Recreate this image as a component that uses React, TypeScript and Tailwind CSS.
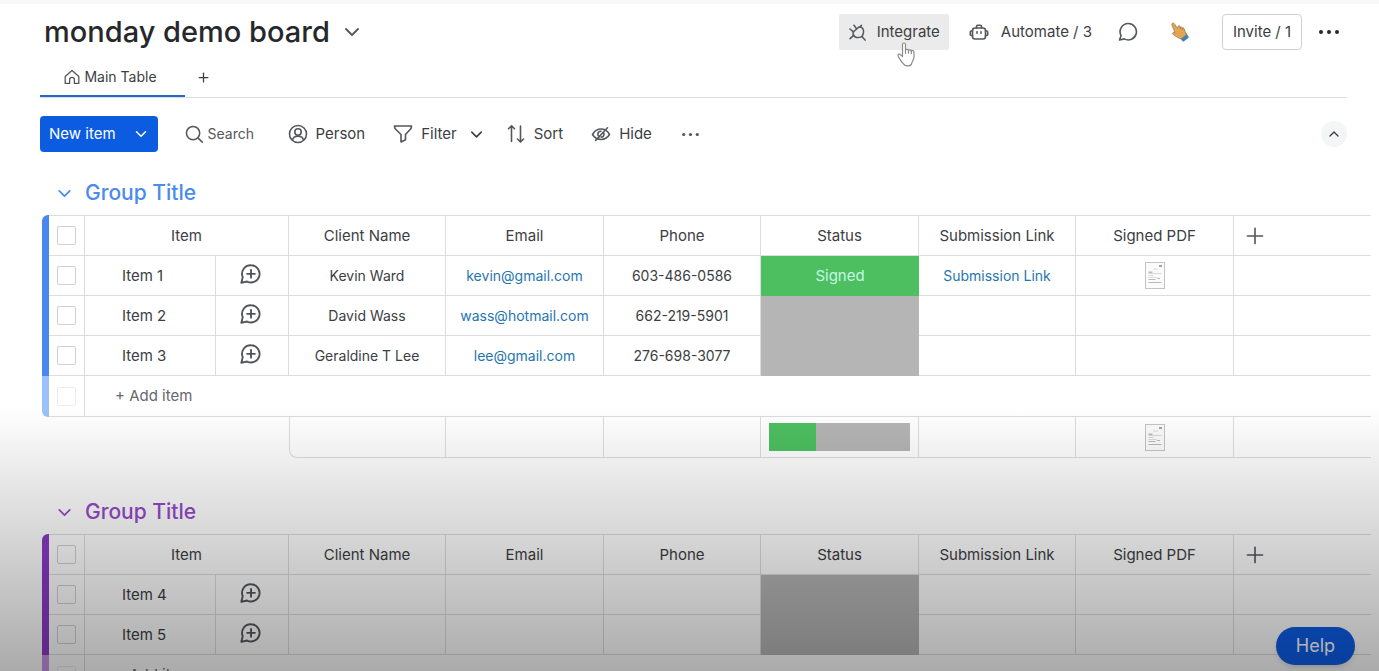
import { useState } from 'react'
import type { ReactNode } from 'react'
import clsx from 'clsx'
import { ChevronDown, ChevronUp, Plus } from 'lucide-react'

interface BoardItem {
  id: string
  name: string
  client?: string
  email?: string
  phone?: string
  status?: 'Signed'
  link?: string
  pdf?: boolean
}

interface BoardGroup {
  id: string
  titleClass: string
  barClass: string
  fadedBarClass: string
  items: BoardItem[]
}

const COLUMNS = ['Client Name', 'Email', 'Phone', 'Status', 'Submission Link', 'Signed PDF']

const GROUPS: BoardGroup[] = [
  {
    id: 'g1',
    titleClass: 'text-[#4a8bec]',
    barClass: 'bg-[#4a86f0]',
    fadedBarClass: 'bg-[#9ac1fa]',
    items: [
      {
        id: '1',
        name: 'Item 1',
        client: 'Kevin Ward',
        email: 'kevin@gmail.com',
        phone: '603-486-0586',
        status: 'Signed',
        link: 'Submission Link',
        pdf: true,
      },
      { id: '2', name: 'Item 2', client: 'David Wass', email: 'wass@hotmail.com', phone: '662-219-5901' },
      { id: '3', name: 'Item 3', client: 'Geraldine T Lee', email: 'lee@gmail.com', phone: '276-698-3077' },
    ],
  },
  {
    id: 'g2',
    titleClass: 'text-[#9649cc]',
    barClass: 'bg-[#8a3ac6]',
    fadedBarClass: 'bg-[#c793e6]',
    items: [
      { id: '4', name: 'Item 4' },
      { id: '5', name: 'Item 5' },
    ],
  },
]

const Icon = ({ children, size = 19, className }: { children: ReactNode; size?: number; className?: string }) => (
  <svg
    width={size}
    height={size}
    viewBox="0 0 20 20"
    fill="none"
    stroke="currentColor"
    strokeWidth={1.6}
    strokeLinecap="round"
    strokeLinejoin="round"
    className={clsx('shrink-0 text-[#55575c]', className)}
    aria-hidden="true"
  >
    {children}
  </svg>
)

const HomeIcon = () => (
  <Icon size={16}>
    <path d="M1.500 9.500 10 2l8.500 7.500V18H13v-4.500a3 3 0 0 0-6 0V18H1.500z" />
  </Icon>
)

const PlugIcon = () => (
  <Icon>
    <path d="M5.500 9.500 10.500 5c1.500-1.300 3.500-1 4.800.5s1.500 3 1 4.800c-.3 1.300-.8 3-1.800 4-1.700.8-3.500 1.300-5.500.9-2.500-.6-4.500-3-3.500-5.700z" />
    <path d="m6.300 2.300 2.800 3.900M2 6.300l3.800 3M12.200 4.400l2-2M2.200 16.500l4-3.700M14.500 14.200l3.500 3.800" />
  </Icon>
)

const RobotIcon = () => (
  <Icon size={20}>
    <rect x="3.500" y="6" width="13" height="11" rx="2.500" />
    <path d="M7.500 6V4.500c0-.8.500-1.200 1.200-1.200h2.600c.7 0 1.200.4 1.200 1.200V6M3.500 9H2.300c-.6 0-1 .4-1 1v2.500c0 .6.400 1 1 1h1.200M16.500 9h1.200c.6 0 1 .4 1 1v2.500c0 .6-.4 1-1 1h-1.200M8 9.700v1.600M12 9.700v1.600" />
  </Icon>
)

const ChatIcon = () => (
  <Icon size={20}>
    <path d="M10.200 1.500a8.200 8.200 0 1 1-3.900 15.400L1.500 18l1.600-4.400A8.200 8.200 0 0 1 10.200 1.500z" />
  </Icon>
)

const ChatPlusIcon = () => (
  <Icon size={21}>
    <path
      d="M10.500 1.200a8.200 8.200 0 1 1-3.800 15.500L1.200 18l1.400-5.400A8.200 8.200 0 0 1 10.500 1.200zM10.500 5.700v7.400M6.800 9.400h7.400"
      strokeWidth={1.8}
    />
  </Icon>
)

const WavingHand = () => (
  <svg width="18" height="20" viewBox="0 0 18 20" aria-hidden="true">
    <path d="m8.800 15.800 6.300-4.800 2.400 3.400c.4.600.3 1.100-.2 1.500l-4.300 3.300c-.6.400-1.200.4-1.600-.2z" fill="#3f7fba" />
    <path
      d="M1.300 1.400c.8-.6 1.700-.3 2.200.5l2.700 4.300 1-2c.4-.9 1.700-.6 1.900.3l.1.700c.8-.6 1.700-.3 2 .6 1-.3 1.800.2 2 1.100l1.800 5c.2.800 0 1.300-.6 1.700l-4 3c-.6.400-1.300.3-1.900-.1l-4-2.400c-1.500-.9-2.700-1.500-2.900-2.600-.1-.9.600-1.300 1.500-1l1 .3L1 3.300c-.3-.7-.3-1.400.3-1.900z"
      fill="#e2a554"
      stroke="#a08048"
      strokeWidth=".8"
    />
    <path d="m9.200 5.200.6 2.300M11.200 5.800l.7 2.200" stroke="#a08048" strokeWidth=".8" />
  </svg>
)

const SearchIcon = () => (
  <Icon>
    <circle cx="8.500" cy="8.500" r="7" />
    <path d="m13.600 13.600 4.600 4.400" />
  </Icon>
)

const PersonIcon = () => (
  <Icon size={20}>
    <circle cx="10" cy="10" r="8.500" />
    <circle cx="10" cy="8" r="3.200" />
    <path d="M4.500 15.800c.5-2.500 2.400-3.600 5.500-3.600s5 1.100 5.500 3.600" />
  </Icon>
)

const FilterIcon = () => (
  <Icon size={20}>
    <path d="M1.500 2h17l-.5 2.500-5.500 6v5.300L8 18v-7.500L2 4.500z" />
  </Icon>
)

const SortIcon = () => (
  <Icon size={20}>
    <path d="M5.500 17.500V2M2.500 4.800l3-3 3 3M14.500 2v15.500M11.500 15l3 3 3-3" />
  </Icon>
)

const HideIcon = () => (
  <Icon size={20}>
    <path d="M1.500 10.500C3.500 7 6.500 5 10 5s6.500 1.800 8.500 5.500c-2 3.200-5 5-8.500 5s-6.500-1.700-8.500-5z" />
    <path d="M10 7.300c-2 0-3.200 1.300-3.200 3 0 1.200.7 2 1.700 2.600M12.600 8.700c1.100 1.900.1 4.200-2.300 4.400M16.500 3.800 4.500 16.500" />
  </Icon>
)

const Dots = ({ size = 20, radius = 2 }: { size?: number; radius?: number }) => (
  <svg width={size} height={size} viewBox="0 0 20 20" fill="currentColor" aria-hidden="true">
    <circle cx="2" cy="10" r={radius} />
    <circle cx="10" cy="10" r={radius} />
    <circle cx="18" cy="10" r={radius} />
  </svg>
)

const HandCursor = () => (
  <svg width="20" height="25" viewBox="0 0 20 25" fill="#fff" stroke="#8b8b8b" strokeWidth="1.200" strokeLinejoin="round" aria-hidden="true">
    <path d="M6.500 14.500V2.500C6.500 1.500 7.200 1 8 1s1.500.5 1.500 1.500v5.700c.2-1.300 2.900-1.200 3 .3.400-1.100 2.700-.9 2.800.6.500-1 2.700-.8 2.700 1v4.400c0 1.600-.5 3-1.200 4.200-.8 1.500-1.300 2.700-1.500 3.800-1.500 1.800-5.200 1.800-6.800.5-2.400-2-4.500-5-6.300-8.700-.9-1.800.8-3 2.200-1.700z" />
    <path d="M9.500 8.200v3.600M12.500 8.500v3.300M15.300 9.100v3" />
  </svg>
)

const PdfThumb = () => (
  <svg width="20" height="27" viewBox="0 0 20 27" className="mx-auto" role="img" aria-label="Signed document">
    <rect x=".5" y=".5" width="19" height="26" fill="#fbfbfb" stroke="#c4c4c4" />
    <path d="M14 4h3" stroke="#888" strokeWidth="1.500" />
    <path d="M8 7h5M3.500 9.500h4M3.500 11.500h13M3.500 13.500h5M3.500 15.500h8" stroke="#dadada" />
    <path d="M3.500 10.500h4M3.500 17.500h7M12 16.500h3M3.500 20.500h13" stroke="#bbb" />
  </svg>
)

const CELL = 'border-b border-r border-[#dcdde0] p-0'

const CheckCell = ({ label, faded }: { label: string; faded?: boolean }) => (
  <td className={CELL}>
    <input
      type="checkbox"
      aria-label={label}
      className={clsx(
        'mx-auto block size-[19px] appearance-none rounded-xs border bg-white checked:bg-blue-600',
        faded ? 'border-[#ebecef]' : 'border-[#cfd1d6]'
      )}
    />
  </td>
)

const ToolbarButton = ({ icon, label }: { icon: ReactNode; label: string }) => (
  <button type="button" className="flex items-center gap-2">
    {icon}
    {label}
  </button>
)

const GroupTable = ({ group }: { group: BoardGroup }) => {
  const signed = group.items.filter((item) => item.status === 'Signed').length
  const hasPdf = group.items.some((item) => item.pdf)

  return (
    <section>
      <h2 className={clsx('flex h-8 items-center gap-[10px] pl-[14px] text-[21px] font-medium', group.titleClass)}>
        <button type="button" aria-label="Collapse group">
          <ChevronDown size={21} />
        </button>
        Group Title
      </h2>
      <table className="mt-[6px] ml-[2px] w-full table-fixed border-separate border-spacing-0 text-center">
        <colgroup>
          <col className="w-[7px]" />
          <col className="w-[36px]" />
          <col className="w-[131px]" />
          <col className="w-[73px]" />
          <col className="w-[157px]" />
          <col className="w-[158px]" />
          <col className="w-[157px]" />
          <col className="w-[158px]" />
          <col className="w-[157px]" />
          <col className="w-[158px]" />
          <col />
        </colgroup>
        <thead className="[&_td]:border-t [&_th]:border-t">
          <tr className="h-[41px]">
            <td className={clsx('rounded-tl-md border-0! p-0', group.barClass)} />
            <CheckCell label="Select all items" />
            <th colSpan={2} className={clsx(CELL, 'font-normal')}>
              Item
            </th>
            {COLUMNS.map((column) => (
              <th key={column} className={clsx(CELL, 'font-normal')}>
                {column}
              </th>
            ))}
            <th className="border-b border-[#dcdde0] p-0">
              <button type="button" aria-label="Add column" className="ml-2 block text-[#55575c]">
                <Plus size={26} strokeWidth={1.5} />
              </button>
            </th>
          </tr>
        </thead>
        <tbody>
          {group.items.map((item) => (
            <tr key={item.id} className="h-10">
              <td className={clsx('p-0', group.barClass)} />
              <CheckCell label={`Select ${item.name}`} />
              <td className={clsx(CELL, 'pl-[37px] text-left')}>{item.name}</td>
              <td className={CELL}>
                <button type="button" aria-label={`Comment on ${item.name}`} className="ml-6 block pb-[2px]">
                  <ChatPlusIcon />
                </button>
              </td>
              <td className={clsx(CELL, 'text-sm')}>{item.client}</td>
              <td className={clsx(CELL, 'text-sm')}>
                {item.email && (
                  <a href={`mailto:${item.email}`} className="text-[#1f76b0]">
                    {item.email}
                  </a>
                )}
              </td>
              <td className={clsx(CELL, 'text-sm')}>{item.phone}</td>
              <td className={clsx('p-0', item.status ? 'bg-[#4dbf61] text-[#c4f8e4]' : 'bg-[#b5b5b5]')}>{item.status}</td>
              <td className={clsx(CELL, 'text-sm')}>
                {item.link && (
                  <a href="#submission" className="text-[#1f76b0]">
                    {item.link}
                  </a>
                )}
              </td>
              <td className={CELL}>{item.pdf && <PdfThumb />}</td>
              <td className="border-b border-[#dcdde0] p-0" />
            </tr>
          ))}
          <tr className="h-[41px]">
            <td className={clsx('rounded-bl-md p-0', group.fadedBarClass)} />
            <CheckCell label="New item" faded />
            <td colSpan={9} className="border-b border-[#dcdde0] p-0 pl-[30px] text-left">
              <button type="button" className="text-[#66686d]">
                + Add item
              </button>
            </td>
          </tr>
        </tbody>
        <tfoot>
          <tr className="h-[41px]">
            <td colSpan={4} className="p-0" />
            <td className={clsx(CELL, 'rounded-bl-lg border-l')} />
            <td className={CELL} />
            <td className={CELL} />
            <td className={clsx(CELL, 'px-2')}>
              <div className="flex h-7 bg-[#b5b5b5]">
                <div className="bg-[#4dbf61]" style={{ width: `${(signed / group.items.length) * 100}%` }} />
              </div>
            </td>
            <td className={CELL} />
            <td className={CELL}>{hasPdf && <PdfThumb />}</td>
            <td className="border-b border-[#dcdde0] p-0" />
          </tr>
        </tfoot>
      </table>
    </section>
  )
}

const App = () => {
  const [search, setSearch] = useState('')

  return (
    <div className="relative h-screen overflow-hidden bg-white font-['Inter','Noto_Sans',sans-serif] text-[15px] leading-5 text-[#3c3e43]">
      <div className="h-1 bg-[#f8f8f8]" />
      <div className="pr-8 pl-10">
        <header className="flex items-center pt-[10px]">
          <h1 className="pl-1 text-[29px] leading-9 font-medium text-[#26282c]">monday demo board</h1>
          <button type="button" aria-label="Board menu" className="ml-[10px] text-[#55575c]">
            <ChevronDown size={24} strokeWidth={1.8} />
          </button>
          <div className="ml-auto flex h-9 items-center">
            <button type="button" className="relative flex h-9 items-center gap-[10px] rounded-xs bg-[#ebebeb] px-[9px]">
              <PlugIcon />
              Integrate
              <span className="absolute top-7 left-[57px]">
                <HandCursor />
              </span>
            </button>
            <button type="button" className="ml-5 flex items-center gap-3">
              <RobotIcon />
              Automate / 3
            </button>
            <button type="button" aria-label="Discussion" className="ml-[26px]">
              <ChatIcon />
            </button>
            <button type="button" aria-label="Say hello" className="ml-[33px]">
              <WavingHand />
            </button>
            <button type="button" className="ml-[33px] h-9 w-20 rounded-sm border border-[#d0d1d5]">
              Invite / 1
            </button>
            <button type="button" aria-label="More options" className="mr-2 ml-[17px] text-[#26282c]">
              <Dots />
            </button>
          </div>
        </header>

        <nav className="mt-2 flex h-10 border-b border-[#dcdde0]">
          <button
            type="button"
            className="flex w-[145px] items-center justify-center gap-1 border-b-2 border-[#2468c8] pr-1 text-sm"
          >
            <HomeIcon />
            Main Table
          </button>
          <button type="button" aria-label="Add view" className="px-[11px]">
            <Plus size={15} />
          </button>
        </nav>

        <div className="mt-[18px] flex h-9 items-center">
          <div className="flex h-9 items-center rounded-sm bg-[#0b5ce0] text-white">
            <button type="button" className="pl-[9px]">
              New item
            </button>
            <button type="button" aria-label="New item options" className="ml-2 px-2">
              <ChevronDown size={18} />
            </button>
          </div>
          <label className="ml-[27px] flex items-center gap-1">
            <SearchIcon />
            <input
              type="text"
              aria-label="Search"
              placeholder="Search"
              value={search}
              onChange={(e) => setSearch(e.target.value)}
              className="w-[54px] text-sm outline-none placeholder:text-[#55575c]"
            />
          </label>
          <div className="ml-[26px] flex items-center gap-7">
            <ToolbarButton icon={<PersonIcon />} label="Person" />
            <div className="flex items-center">
              <ToolbarButton icon={<FilterIcon />} label="Filter" />
              <button type="button" aria-label="Filter options" className="ml-[10px]">
                <ChevronDown size={19} />
              </button>
            </div>
          </div>
          <div className="ml-5 flex items-center gap-7">
            <ToolbarButton icon={<SortIcon />} label="Sort" />
            <ToolbarButton icon={<HideIcon />} label="Hide" />
            <button type="button" aria-label="More tools" className="ml-[2px] text-[#55575c]">
              <Dots size={17} radius={1.9} />
            </button>
          </div>
          <button
            type="button"
            aria-label="Collapse header"
            className="ml-auto flex size-[26px] items-center justify-center rounded-full bg-[#f4f5f7]"
          >
            <ChevronUp size={16} />
          </button>
        </div>
      </div>

      <main className="mt-6 flex flex-col gap-[38px] pt-px pr-[10px] pl-10">
        {GROUPS.map((group) => (
          <GroupTable key={group.id} group={group} />
        ))}
      </main>

      <button type="button" className="absolute right-6 bottom-[6px] h-[38px] w-[79px] rounded-full bg-[#0d5de8] text-lg text-white shadow-md">
        Help
      </button>
      <div className="pointer-events-none absolute inset-x-0 bottom-0 h-[264px] bg-linear-to-b from-black/0 to-black/33" />
    </div>
  )
}

export default App
